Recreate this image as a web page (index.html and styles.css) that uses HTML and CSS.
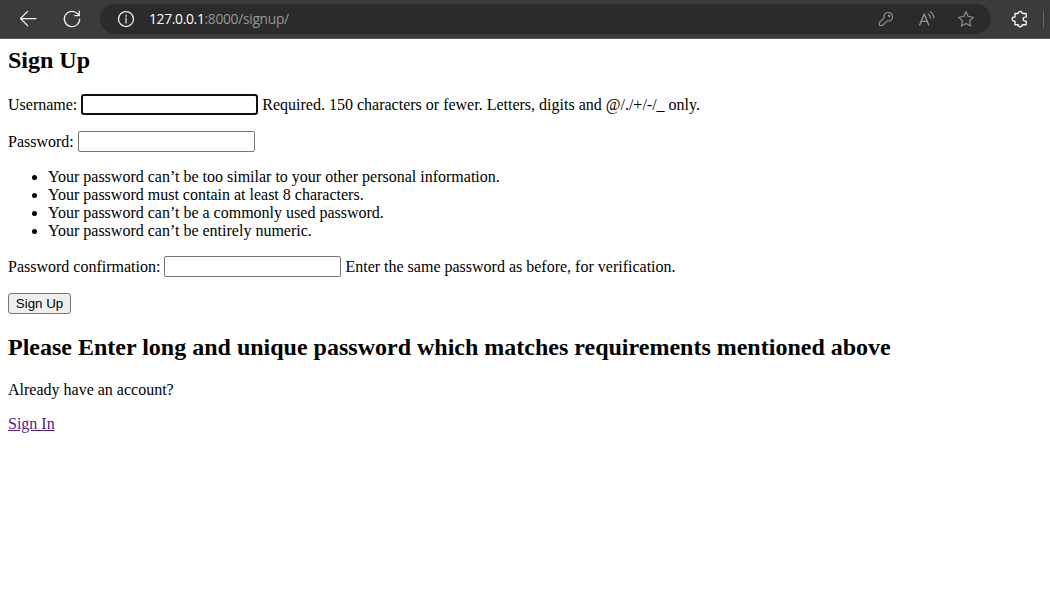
FILE: index.html
```html
<!DOCTYPE html>
<html lang="en">
<head>
<meta charset="utf-8">
<title>Sign Up</title>
<link rel="stylesheet" href="styles.css">
</head>
<body>
<header class="toolbar">
  <svg class="icon back" width="20" height="20" viewBox="0 0 20 20"><path d="M18 9.5H2.5M9.5 2.5 2.5 9.5l7 7"/></svg>
  <svg class="icon reload" width="20" height="20" viewBox="0 0 20 20"><path d="M17.7 10A7.7 7.7 0 1 1 15.6 4.7L17.2 6.5M17.3 2v4.7h-4.7"/></svg>
  <div class="address">
    <svg class="icon info" width="18" height="18" viewBox="0 0 18 18"><circle cx="9" cy="9" r="7.5"/><path d="M9 8v5M9 5v1.3"/></svg>
    <span class="url"><span class="host">127.0.0.1</span>:8000/signup/</span>
    <svg class="icon dim key" width="18" height="18" viewBox="0 0 18 18"><path d="M7.2 7.9C6.3 4.9 8.3 2.5 11.2 2.5c2.5 0 4.3 1.8 4.3 4.2 0 2.9-2.3 4.8-5.2 4.2l-5 4.6H2.5v-3z"/><circle cx="12.2" cy="5.8" r=".7"/></svg>
    <svg class="icon dim read" width="18" height="18" viewBox="0 0 18 18"><path class="letter" d="M1.7 15 6.2 4l4.5 11M3.3 11.4h5.9"/><path d="M10 4c1.5.8 2.4 2.1 2.5 4M12.2 1.8c2.3 1.3 3.6 3.4 3.7 6.2"/></svg>
    <svg class="icon dim star" width="18" height="18" viewBox="0 0 18 18"><path d="m9 1.8 2.2 4.7 5.2.7-3.8 3.6.9 5.2L9 13.5 4.5 16l.9-5.2-3.8-3.6 5.2-.7z"/></svg>
  </div>
  <svg class="icon extensions" width="18" height="18" viewBox="0 0 18 18"><path d="M4 3.5h3.2a2 2 0 0 1 4 0h4v3.6h-1a2 2 0 0 0 0 4h1v3.6h-4a2 2 0 0 1-4 0H4v-3.5h-.7a2.1 2.1 0 0 1 0-4.2H4z"/></svg>
  <span class="separator"></span>
</header>
<main class="page">
  <h2 class="title">Sign Up</h2>
  <form class="form">
    <p class="row user-row"><label for="username">Username:</label> <input class="field focused" id="username" type="text"> <span>Required. 150 characters or fewer. Letters, digits and @/./+/-/_ only.</span></p>
    <p class="row password-row"><label for="password">Password:</label> <input class="field" id="password" type="password"></p>
    <ul class="rules">
      <li>Your password can’t be too similar to your other personal information.</li>
      <li>Your password must contain at least 8 characters.</li>
      <li>Your password can’t be a commonly used password.</li>
      <li>Your password can’t be entirely numeric.</li>
    </ul>
    <p class="row confirm-row"><label for="confirm">Password confirmation:</label> <input class="field" id="confirm" type="password"> <span>Enter the same password as before, for verification.</span></p>
    <button class="submit" type="button">Sign Up</button>
  </form>
  <h2 class="notice">Please Enter long and unique password which matches requirements mentioned above</h2>
  <p class="account">Already have an account?</p>
  <p class="signin"><a class="link" href="#">Sign In</a></p>
</main>
</body>
</html>
```
FILE: styles.css
```css
* { box-sizing: border-box; }
body { margin: 0; background: #fff; color: #000; font: 16px/18px "Liberation Serif", "Times New Roman", serif; }
.toolbar { height: 39px; display: flex; align-items: center; background: #3b3b3b; border-bottom: 1px solid #555; }
.icon { flex: none; fill: none; stroke: #eee; stroke-width: 1.25; stroke-linecap: round; stroke-linejoin: round; }
.back { margin-left: 18px; }
.reload { margin-left: 24px; }
.address { width: 891px; height: 30px; margin-left: 18px; padding: 0 16px 0 17px; display: flex; align-items: center; border-radius: 15px; background: #2b2b2b; }
.url { margin-left: 14px; flex: 1; color: #969696; font: 13.8px/20px "Open Sans", "Noto Sans", sans-serif; letter-spacing: -0.3px; }
.host { color: #fff; }
.dim { stroke: #929292; stroke-width: 1.15; }
.letter { stroke-width: 1.4; }
.read { margin-left: 23px; }
.star { margin-left: 21px; }
.extensions { margin-left: 20px; stroke-width: 1.4; }
.separator { width: 1px; height: 17px; margin-left: 14px; background: #666; }
.page { padding: 7px 8px 0; }
.title, .notice { margin: 0; font-size: 24px; line-height: 28px; font-weight: bold; }
.form { margin-top: 20px; }
.row { height: 21px; margin: 0; display: flex; align-items: center; gap: 4px; line-height: 21px; white-space: nowrap; }
.row label, .row span { padding-bottom: 1px; }
.password-row { margin-top: 16px; }
.field { width: 177px; height: 21px; margin: 0; padding: 0 2px; border: 1px solid #767676; border-radius: 2px; background: #fff; outline: none; }
.focused { border: 2px solid #101010; border-radius: 3px; }
.rules { margin: 16px 0; padding-left: 40px; }
.submit { display: block; width: 63px; height: 21px; margin-top: 16px; padding: 0; border: 1px solid #767676; border-radius: 3px; background: #efefef; color: #000; font: 13.333px/19px "Liberation Sans", Arial, sans-serif; }
.notice { margin-top: 19px; }
.account { margin: 20px 0 0; }
.signin { margin: 16px 0 0; }
.link { color: #551a8b; text-decoration: underline; }
```
